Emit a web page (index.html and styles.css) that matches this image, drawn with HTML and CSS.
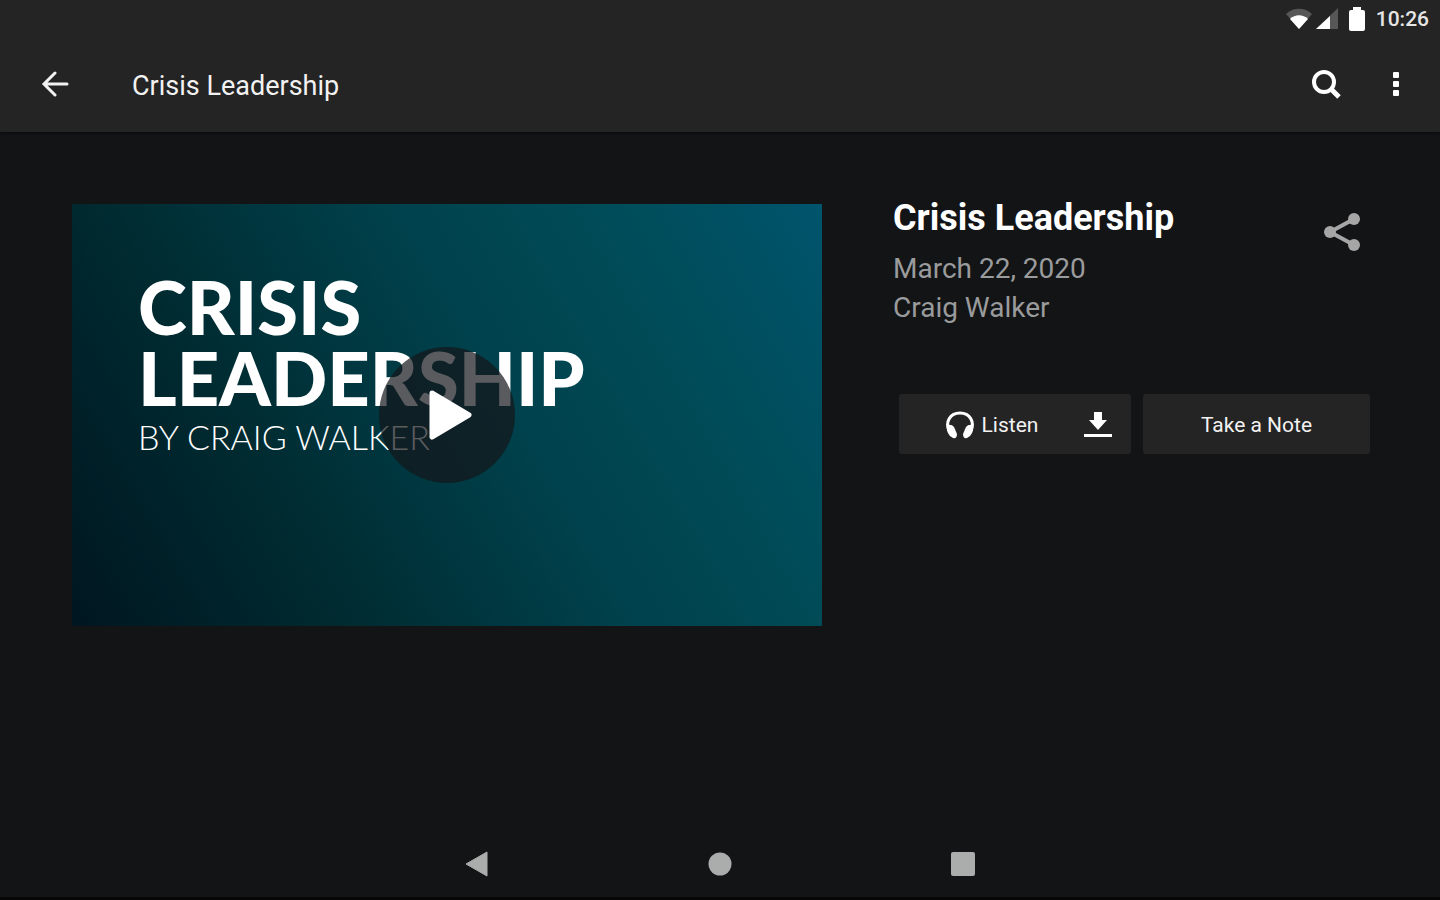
FILE: index.html
```html
<!DOCTYPE html>
<html lang="en">
<head>
    <meta charset="UTF-8">
    <meta name="viewport" content="width=device-width, initial-scale=1.0">
    <title>Crisis Leadership</title>
    <link rel="stylesheet" href="styles.css">
</head>
<body>
    <header class="top">
        <div class="status-bar">
            <svg width="26" height="22" viewBox="0 0 26 22">
                <path d="M0 6C7-1 19-1 26 6L13 21Z" fill="#575757"/>
                <path d="M4 11C9 6 17 6 22 11L13 21Z" fill="#fff"/>
            </svg>
            <svg class="signal" width="22" height="22" viewBox="0 0 22 22">
                <path d="M0 21L22 0V21Z" fill="#575757"/>
                <path d="M0 21L14 8V21Z" fill="#fff"/>
            </svg>
            <svg class="battery" width="16" height="24" viewBox="0 0 16 24">
                <path d="M4 0H12V3H14Q16 3 16 5V22Q16 24 14 24H2Q0 24 0 22V5Q0 3 2 3H4Z" fill="#fff"/>
            </svg>
            <span class="clock">10:26</span>
        </div>
        <div class="app-bar">
            <button class="icon-button" type="button" aria-label="Back">
                <svg width="28" height="28" viewBox="0 0 28 28" fill="none" stroke="#f2f2f2" stroke-width="3">
                    <path d="M26 13H4M14 2L3 13L14 24" stroke-linecap="round"/>
                </svg>
            </button>
            <h1 class="app-title">Crisis Leadership</h1>
            <button class="icon-button" type="button" aria-label="Search">
                <svg width="30" height="30" viewBox="0 0 30 30" fill="none" stroke="#fff">
                    <circle cx="12" cy="12" r="10" stroke-width="4"/>
                    <path d="M19 19L27 27" stroke-width="5"/>
                </svg>
            </button>
            <button class="icon-button" type="button" aria-label="More options">
                <svg width="8" height="28" viewBox="0 0 8 28" fill="#fff">
                    <rect x="1" y="1" width="6" height="6" rx="1"/>
                    <rect x="1" y="10" width="6" height="6" rx="1"/>
                    <rect x="1" y="19" width="6" height="6" rx="1"/>
                </svg>
            </button>
        </div>
    </header>

    <main class="content">
        <section class="video">
            <p class="cover-title">CRISIS<br>LEADERSHIP</p>
            <p class="cover-author">BY CRAIG WALKER</p>
            <button class="play" type="button" aria-label="Play video">
                <svg width="44" height="52" viewBox="0 0 44 52">
                    <path d="M3 4L40 26L3 48Z" fill="#fff" stroke="#fff" stroke-width="5" stroke-linejoin="round"/>
                </svg>
            </button>
        </section>

        <section class="details">
            <div class="details-head">
                <div>
                    <h2 class="title">Crisis Leadership</h2>
                    <p class="meta">March 22, 2020</p>
                    <p class="meta">Craig Walker</p>
                </div>
                <button class="icon-button share" type="button" aria-label="Share">
                    <svg width="36" height="38" viewBox="0 0 36 38" fill="#a6a6a6">
                        <path d="M30 6L6 19L30 32" fill="none" stroke="#a6a6a6" stroke-width="4"/>
                        <circle cx="30" cy="6" r="6"/>
                        <circle cx="6" cy="19" r="6"/>
                        <circle cx="30" cy="32" r="6"/>
                    </svg>
                </button>
            </div>
            <div class="actions">
                <div class="action-group">
                    <button class="action listen" type="button">
                        <svg width="28" height="28" viewBox="0 0 28 28">
                            <path d="M3 20C-1 11 4 2 14 2S29 11 25 20" fill="none" stroke="#fff" stroke-width="3"/>
                            <path d="M1 14Q6 13 8 16L11 23Q11 28 7 27Q0 24 1 14Z" fill="#fff"/>
                            <path d="M27 14Q22 13 20 16L17 23Q17 28 21 27Q28 24 27 14Z" fill="#fff"/>
                        </svg>
                        Listen
                    </button>
                    <button class="action download" type="button" aria-label="Download">
                        <svg width="28" height="28" viewBox="0 0 28 28" fill="#fff">
                            <path d="M10 1H18V9H23L14 19L5 9H10Z"/>
                            <rect x="0" y="23" width="28" height="3"/>
                        </svg>
                    </button>
                </div>
                <button class="action" type="button">Take a Note</button>
            </div>
        </section>
    </main>

    <nav class="nav-bar">
        <button class="icon-button" type="button" aria-label="System back">
            <svg width="24" height="26" viewBox="0 0 24 26"><path d="M1 13L22 1V25Z" fill="#abadac" stroke="#abadac" stroke-linejoin="round"/></svg>
        </button>
        <button class="icon-button" type="button" aria-label="Home">
            <svg width="24" height="24" viewBox="0 0 24 24"><circle cx="12" cy="12" r="11.5" fill="#abadac"/></svg>
        </button>
        <button class="icon-button" type="button" aria-label="Recent apps">
            <svg width="24" height="24" viewBox="0 0 24 24"><rect width="24" height="24" rx="2" fill="#abadac"/></svg>
        </button>
    </nav>
</body>
</html>
```
FILE: styles.css
```css
* {
    box-sizing: border-box;
}
body {
    margin: 0;
    min-height: 100vh;
    display: flex;
    flex-direction: column;
    font-family: Roboto, "Liberation Sans", sans-serif;
    color: #fff;
    background-color: #131416;
    border-bottom: 3px solid #060607;
}
h1, h2, p {
    margin: 0;
}
button {
    padding: 0;
    border: none;
    background: none;
    color: inherit;
    font-family: inherit;
    cursor: pointer;
}
svg {
    display: block;
}
.top {
    background-color: #242424;
    box-shadow: 0 1px 3px rgba(0,0,0,0.6);
}
.status-bar {
    display: flex;
    align-items: center;
    justify-content: flex-end;
    height: 38px;
    padding: 0 11px;
}
.signal {
    margin-left: 4px;
}
.battery {
    margin: 0 11px;
}
.clock {
    font-size: 21px;
    font-weight: 500;
    color: #e6e6e6;
}
.app-bar {
    display: flex;
    align-items: center;
    gap: 21px;
    height: 94px;
    padding: 0 20px 0 31px;
}
.icon-button {
    display: flex;
    align-items: center;
    justify-content: center;
    width: 48px;
    height: 48px;
}
.app-title {
    flex: 1;
    padding: 2px 0 0 32px;
    font-size: 27px;
    font-weight: 400;
    color: #f2f2f2;
}
.content {
    flex: 1;
    display: grid;
    grid-template-columns: 750fr 477fr;
    gap: 71px;
    align-items: start;
    padding: 72px 70px 72px 72px;
}
.video {
    position: relative;
    aspect-ratio: 16 / 9;
    padding: 67px 66px;
    font-family: Lato, sans-serif;
    background: linear-gradient(60deg, #001620 0%, #002b31 28%, #00414c 56%, #004b57 76%, #00546c 100%);
}
.cover-title {
    font-size: 74px;
    font-weight: 900;
    line-height: 71px;
}
.cover-author {
    font-size: 34px;
    font-weight: 300;
    line-height: 48px;
}
.play {
    position: absolute;
    top: 50%;
    left: 50%;
    width: 136px;
    height: 136px;
    transform: translate(-50%, -50%);
    display: flex;
    align-items: center;
    justify-content: center;
    padding-left: 8px;
    border-radius: 50%;
    background-color: rgba(20,22,26,0.7);
}
.details-head {
    display: flex;
    align-items: flex-start;
    justify-content: space-between;
}
.title {
    font-size: 36px;
    font-weight: 700;
    line-height: 44px;
    margin-top: -8px;
}
.meta {
    font-size: 28px;
    line-height: 39px;
    color: #9a9b9c;
}
.title + .meta {
    margin-top: 9px;
}
.share {
    margin: 4px 4px 0 0;
}
.actions {
    display: grid;
    grid-template-columns: 232fr 227fr;
    gap: 12px;
    margin: 67px 0 0 6px;
}
.action, .action-group {
    display: flex;
    align-items: center;
    justify-content: center;
    height: 60px;
    border-radius: 3px;
    background-color: #242424;
}
.action {
    padding-top: 2px;
    font-size: 21px;
    color: #f2f2f2;
}
.listen {
    flex: 1;
    gap: 8px;
    padding-left: 20px;
}
.download {
    width: 66px;
}
.nav-bar {
    display: flex;
    align-items: center;
    justify-content: center;
    gap: 195px;
    height: 66px;
}
```
